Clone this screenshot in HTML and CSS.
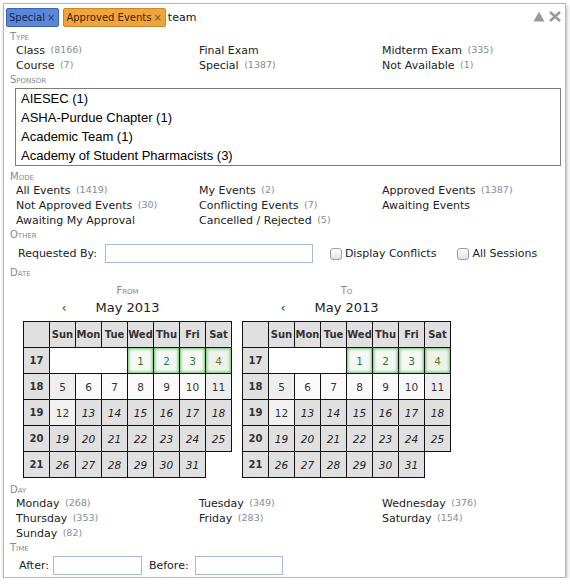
FILE: index.html
```html
<!DOCTYPE html>
<html>
<head>
<meta charset="utf-8">
<link rel="stylesheet" href="styles.css">
</head>
<body>
<div class="widget">
  <div class="bar">
    <span class="token blue">Special<span class="x">×</span></span>
    <span class="token orange">Approved Events<span class="x">×</span></span>
    <span class="query">team</span>
    <span class="ctrls">
      <svg class="ico" width="12" height="11" viewBox="0 0 12 11"><polygon points="0.5,10.5 6,0.5 11.5,10.5" fill="#9a9a9a"/></svg>
      <svg class="ico" width="14" height="11" viewBox="0 0 14 11"><path d="M2 1 L12 10 M12 1 L2 10" stroke="#9a9a9a" stroke-width="2.6" fill="none"/></svg>
    </span>
  </div>
  <div class="panel">
    <div class="hdr">Type</div>
    <div class="opts">
      <span>Class <i>(8166)</i></span><span>Final Exam</span><span>Midterm Exam <i>(335)</i></span>
      <span>Course <i>(7)</i></span><span>Special <i>(1387)</i></span><span>Not Available <i>(1)</i></span>
    </div>
    <div class="hdr">Sponsor</div>
    <div class="list">
      <div>AIESEC (1)</div>
      <div>ASHA-Purdue Chapter (1)</div>
      <div>Academic Team (1)</div>
      <div>Academy of Student Pharmacists (3)</div>
    </div>
    <div class="hdr mode">Mode</div>
    <div class="opts">
      <span>All Events <i>(1419)</i></span><span>My Events <i>(2)</i></span><span>Approved Events <i>(1387)</i></span>
      <span>Not Approved Events <i>(30)</i></span><span>Conflicting Events <i>(7)</i></span><span>Awaiting Events</span>
      <span>Awaiting My Approval</span><span>Cancelled / Rejected <i>(5)</i></span><span></span>
    </div>
    <div class="hdr">Other</div>
    <div class="other">
      <span>Requested By:</span>
      <input class="txt req" type="text">
      <span class="cb first"></span><span>Display Conflicts</span>
      <span class="cb second"></span><span>All Sessions</span>
    </div>
    <div class="hdr date">Date</div>
    <div class="cals">
      <div class="calwrap">
        <div class="callabel">From</div>
        <div class="nav"><span class="prev">‹</span><span class="title">May 2013</span><span></span></div>
        <table class="cal">
          <tr><th></th><th>Sun</th><th>Mon</th><th>Tue</th><th>Wed</th><th>Thu</th><th>Fri</th><th>Sat</th></tr>
          <tr><th>17</th><td colspan="3" class="blank"></td><td class="sel">1</td><td class="sel">2</td><td class="sel">3</td><td class="sel sat">4</td></tr>
          <tr><th>18</th><td class="we">5</td><td class="cur">6</td><td class="cur">7</td><td class="cur">8</td><td class="cur">9</td><td class="cur">10</td><td class="we">11</td></tr>
          <tr><th>19</th><td class="we2">12</td><td class="past">13</td><td class="past">14</td><td class="past">15</td><td class="past">16</td><td class="past">17</td><td class="past">18</td></tr>
          <tr><th>20</th><td class="past">19</td><td class="past">20</td><td class="past">21</td><td class="past">22</td><td class="past">23</td><td class="past">24</td><td class="past">25</td></tr>
          <tr><th>21</th><td class="past">26</td><td class="past">27</td><td class="past">28</td><td class="past">29</td><td class="past">30</td><td class="past">31</td></tr>
        </table>
      </div>
      <div class="calwrap">
        <div class="callabel">To</div>
        <div class="nav"><span class="prev">‹</span><span class="title">May 2013</span><span></span></div>
        <table class="cal">
          <tr><th></th><th>Sun</th><th>Mon</th><th>Tue</th><th>Wed</th><th>Thu</th><th>Fri</th><th>Sat</th></tr>
          <tr><th>17</th><td colspan="3" class="blank"></td><td class="sel">1</td><td class="sel">2</td><td class="sel">3</td><td class="sel sat">4</td></tr>
          <tr><th>18</th><td class="we">5</td><td class="cur">6</td><td class="cur">7</td><td class="cur">8</td><td class="cur">9</td><td class="cur">10</td><td class="we">11</td></tr>
          <tr><th>19</th><td class="we2">12</td><td class="past">13</td><td class="past">14</td><td class="past">15</td><td class="past">16</td><td class="past">17</td><td class="past">18</td></tr>
          <tr><th>20</th><td class="past">19</td><td class="past">20</td><td class="past">21</td><td class="past">22</td><td class="past">23</td><td class="past">24</td><td class="past">25</td></tr>
          <tr><th>21</th><td class="past">26</td><td class="past">27</td><td class="past">28</td><td class="past">29</td><td class="past">30</td><td class="past">31</td></tr>
        </table>
      </div>
    </div>
    <div class="hdr day">Day</div>
    <div class="opts dayopts">
      <span>Monday <i>(268)</i></span><span>Tuesday <i>(349)</i></span><span>Wednesday <i>(376)</i></span>
      <span>Thursday <i>(353)</i></span><span>Friday <i>(283)</i></span><span>Saturday <i>(154)</i></span>
      <span>Sunday <i>(82)</i></span><span></span><span></span>
    </div>
    <div class="hdr">Time</div>
    <div class="time">
      <span>After:</span><input class="txt after" type="text">
      <span class="before">Before:</span><input class="txt bef" type="text">
    </div>
  </div>
</div>
</body>
</html>
```

FILE: styles.css
```css
body {
  margin: 0;
  background: #fff;
  font-family: "DejaVu Sans", Verdana, sans-serif;
  font-size: 11px;
  color: #222;
}

.widget {
  margin: 3px 0 0 3px;
  width: 561px;
  border: 1px solid #a9b9d8;
  box-shadow: 1px 2px 4px rgba(0, 0, 0, 0.28);
  background: #fff;
  padding-bottom: 2px;
}

.bar {
  display: flex;
  align-items: center;
  height: 26px;
  padding: 0 3px 0 2px;
}

.token {
  display: inline-flex;
  align-items: center;
  box-sizing: border-box;
  height: 19px;
  padding: 0 3px 0 2px;
  border: 1px solid;
  border-radius: 2px;
  font-size: 10px;
  margin-right: 4px;
  white-space: nowrap;
}

.token .x {
  font-size: 10px;
  margin-left: 2px;
}

.token.blue {
  background: #5b87d8;
  border-color: #3c63b1;
  color: #16254a;
}

.token.blue .x { color: #2d4277; }

.token.orange {
  background: #f1a43d;
  border-color: #c98726;
  color: #3a2608;
}

.token.orange .x { color: #7b5a2d; }

.query {
  margin-left: -2px;
  font-size: 11px;
  color: #111;
}

.ctrls {
  margin-left: auto;
  display: flex;
  align-items: center;
  gap: 3px;
  margin-top: -1px;
}

.ico { display: block; }

.panel {
  padding-left: 6px;
}

.hdr {
  font-size: 10px;
  font-variant: small-caps;
  color: #8a8a8a;
  line-height: 13px;
}

.hdr.mode { margin-top: 4px; }
.hdr.date { margin-top: 3px; }
.hdr.day { margin-top: 5px; }

.opts {
  display: grid;
  grid-template-columns: repeat(3, 183px);
  line-height: 15px;
  margin-left: 6px;
  white-space: nowrap;
}

.opts i {
  font-style: normal;
  font-size: 9.5px;
  color: #858c99;
  margin-left: 2px;
  position: relative;
  top: -1px;
}

.dayopts { margin-top: 0; }

.list {
  margin: 2px 0 0 5px;
  height: 76px;
  border: 1px solid #7c7c7c;
  padding: 0 0 0 5px;
  box-sizing: content-box;
  width: 539px;
  font-family: "Liberation Sans", Arial, sans-serif;
  font-size: 13px;
  color: #000;
  line-height: 19px;
}

.other {
  display: flex;
  align-items: center;
  margin: 3px 0 0 8px;
  height: 19px;
}

.txt {
  box-sizing: border-box;
  height: 19px;
  border: 1px solid #a7b9db;
  margin: 0;
  padding: 0;
  background: #fff;
  outline: none;
}

.req {
  width: 208px;
  margin-left: 8px;
}

.cb {
  display: inline-block;
  box-sizing: border-box;
  width: 12px;
  height: 12px;
  border: 1px solid #9c9c9c;
  border-radius: 3px;
  background: linear-gradient(#ffffff, #e2e2e2);
  margin-right: 3px;
}

.cb.first { margin-left: 17px; }
.cb.second { margin-left: 21px; }

.cals {
  display: flex;
  gap: 10px;
  margin: 5px 0 0 13px;
}

.calwrap {
  width: 209px;
}

.callabel {
  text-align: center;
  font-size: 10px;
  font-variant: small-caps;
  color: #8a8a8a;
  line-height: 13px;
}

.nav {
  display: grid;
  grid-template-columns: 1fr auto 1fr;
  margin-top: 3px;
  height: 16px;
  line-height: 16px;
  font-size: 13px;
  color: #222;
}

.prev {
  justify-self: end;
  margin-right: 29px;
  font-size: 12px;
  color: #333;
}

.cal {
  border-collapse: collapse;
  margin-top: 5px;
}

.cal th,
.cal td {
  width: 25px;
  height: 25px;
  padding: 0;
  border: 1px solid #111;
  text-align: center;
  vertical-align: middle;
}

.cal th {
  background: #e0e0e0;
  font-size: 10px;
  font-weight: bold;
  color: #333;
}

.cal td {
  font-size: 10.5px;
  color: #333;
}

.cal td.blank { background: #fff; }

.cal td.sel {
  background: #f5f8f5;
  box-shadow: inset 0 0 3px 1px #6fbf6f;
  color: #2d7a2d;
}

.cal td.sel.sat { color: #6a7a18; background: #eef2ea; }

.cal td.cur { background: #fafafa; }
.cal td.we { background: #eeeeee; }
.cal td.we2 { background: #f1f1f1; }

.cal td.past {
  background: #e0e0e0;
  font-style: italic;
  color: #222;
}

.time {
  display: flex;
  align-items: center;
  margin: 2px 0 0 9px;
  height: 19px;
}

.after {
  width: 89px;
  margin-left: 4px;
}

.before { margin-left: 7px; }

.bef {
  width: 88px;
  margin-left: 6px;
}
```
